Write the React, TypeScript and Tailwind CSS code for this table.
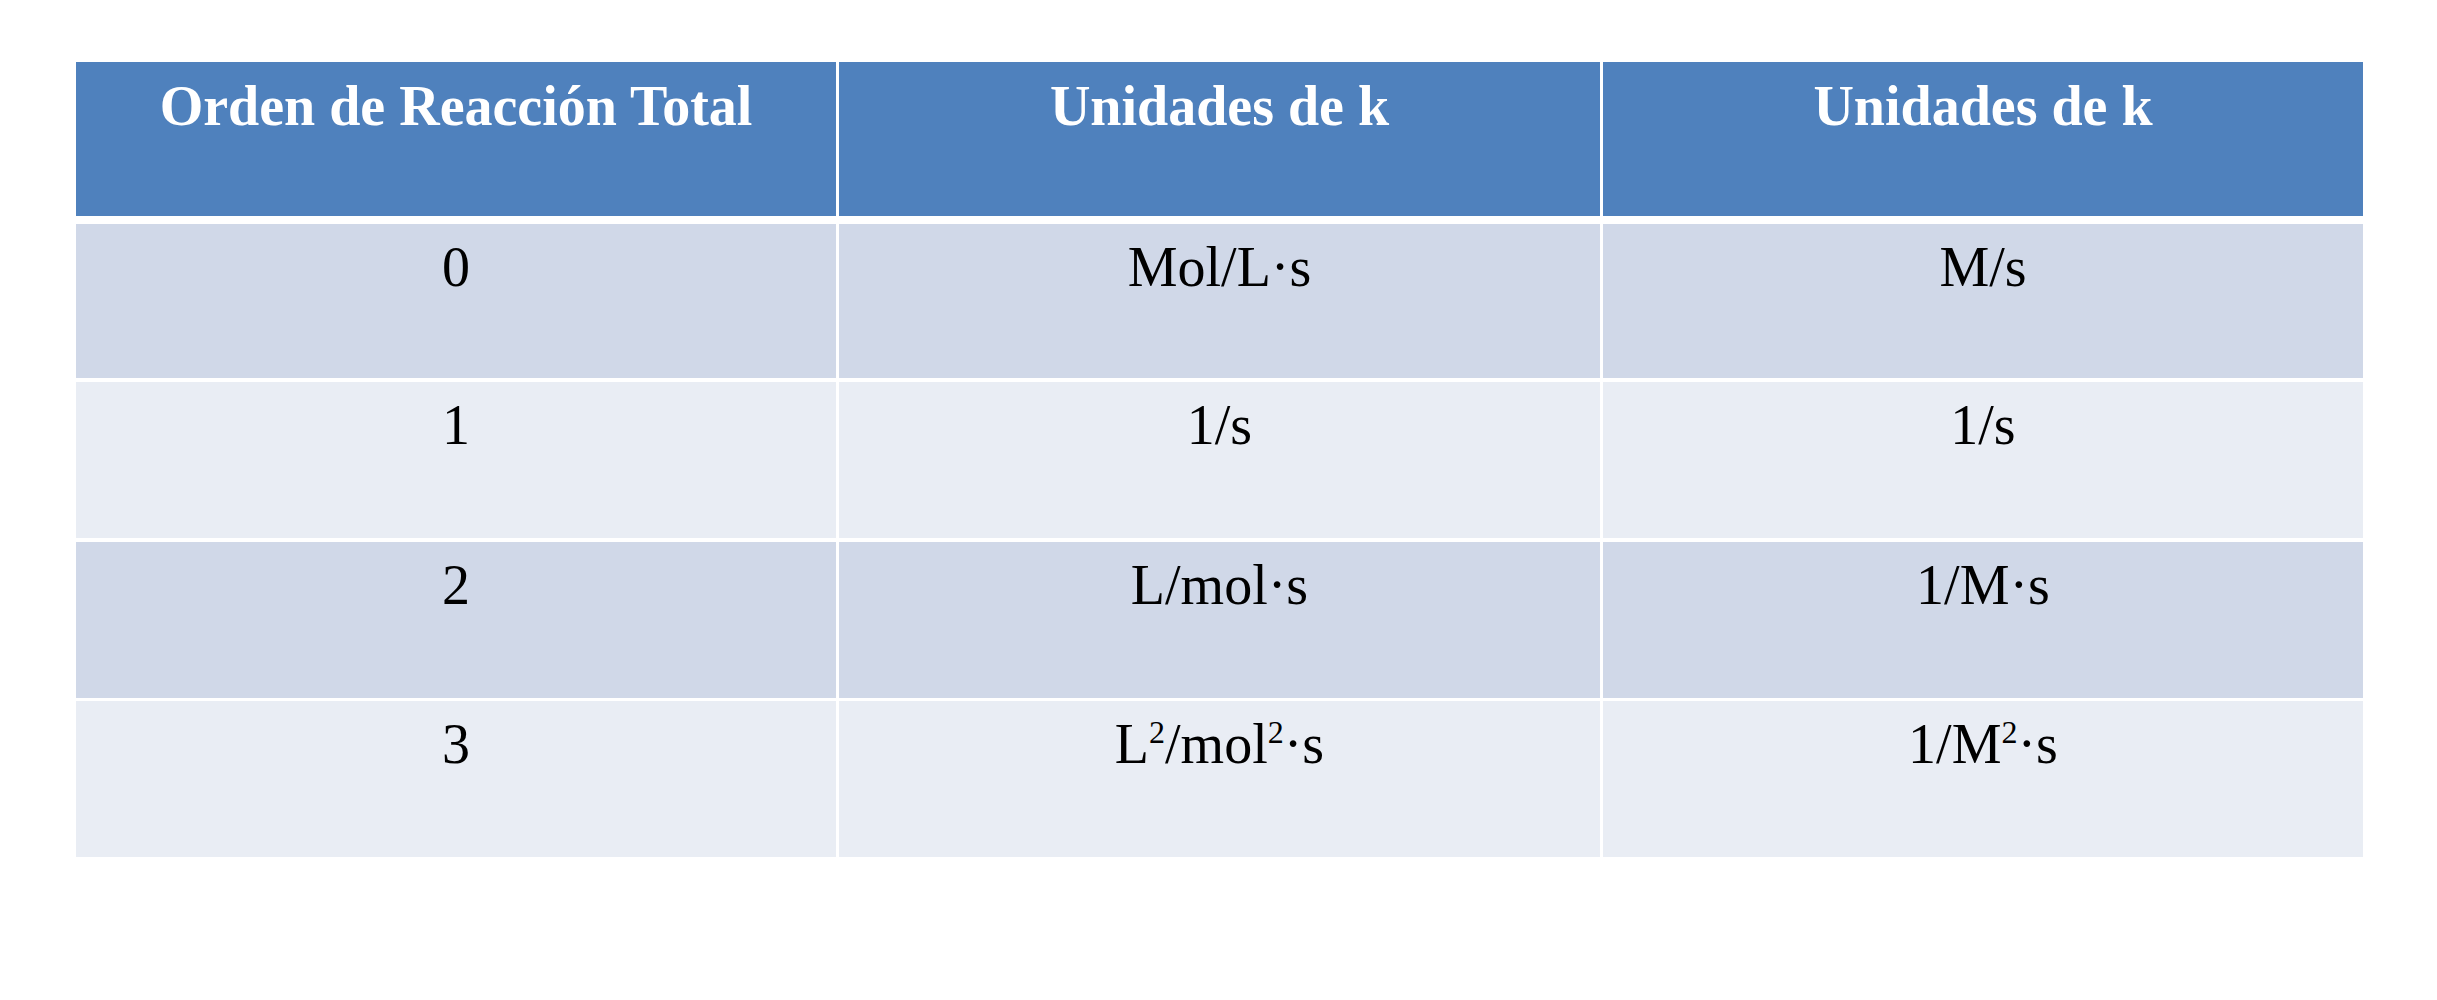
import React from 'react';

const headers = ['Orden de Reacción Total', 'Unidades de k', 'Unidades de k'];

const Sup = ({ children }: { children: React.ReactNode }) => (
  <span className="text-[32px] leading-none align-[20px]">{children}</span>
);

const rows: { cells: React.ReactNode[]; bg: string; h: string; mt: string }[] = [
  { cells: ['0', 'Mol/L·s', 'M/s'], bg: 'bg-[#d0d8e8]', h: 'h-[154px]', mt: 'mt-[8px]' },
  { cells: ['1', '1/s', '1/s'], bg: 'bg-[#e9edf4]', h: 'h-[156px]', mt: 'mt-[4px]' },
  { cells: ['2', 'L/mol·s', '1/M·s'], bg: 'bg-[#d0d8e8]', h: 'h-[156px]', mt: 'mt-[4px]' },
  {
    cells: [
      '3',
      <>L<Sup>2</Sup>/mol<Sup>2</Sup>·s</>,
      <>1/M<Sup>2</Sup>·s</>,
    ],
    bg: 'bg-[#e9edf4]',
    h: 'h-[156px]',
    mt: 'mt-[3px]',
  },
];

export default function App() {
  return (
    <div className="w-full h-[1000px] bg-white pt-[62px] pl-[76px] font-['Liberation_Serif','Times_New_Roman',serif]">
      <div className="flex flex-col w-[2287px]">
        {/* Header */}
        <div className="grid grid-cols-[760px_761px_760px] gap-x-[3px] h-[154px]">
          {headers.map((h, i) => (
            <div
              key={i}
              className="bg-[#4f81bd] text-white font-bold text-[56px] leading-none text-center pt-[16px]"
            >
              {h}
            </div>
          ))}
        </div>

        {/* Body */}
        {rows.map((r, i) => (
          <div key={i} className={`grid grid-cols-[760px_761px_760px] gap-x-[3px] ${r.h} ${r.mt}`}>
            {r.cells.map((c, j) => (
              <div key={j} className={`${r.bg} text-black text-[56px] leading-none text-center pt-[15px]`}>
                {c}
              </div>
            ))}
          </div>
        ))}
      </div>
    </div>
  );
}
